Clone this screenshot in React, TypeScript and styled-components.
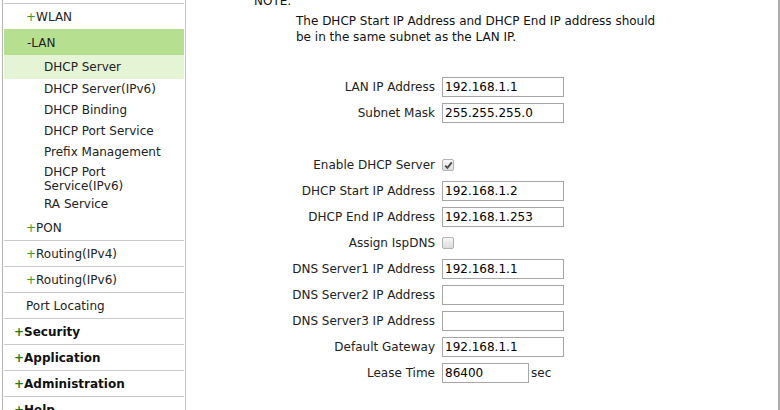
import styled, { createGlobalStyle } from "styled-components";

const GlobalStyle = createGlobalStyle`
  body {
    margin: 0;
    background: #fff;
    font-family: "DejaVu Sans", Verdana, sans-serif;
    font-size: 12px;
    color: #222;
  }
`;

const Page = styled.div`
  display: flex;
  height: 410px;
  padding-left: 2px;
  overflow: hidden;
`;

const Sidebar = styled.nav`
  box-sizing: border-box;
  width: 184px;
  flex-shrink: 0;
  padding: 3px 1px 0;
  border-left: 1px solid #b4b4b4;
  border-right: 1px solid #c4c4c4;
`;

const MenuList = styled.div`
  border-top: 1px solid #cacaca;
`;

const MenuRow = styled.div<{ $bold?: boolean }>`
  box-sizing: border-box;
  display: flex;
  align-items: center;
  height: 26px;
  padding-top: 1px;
  padding-left: ${p => (p.$bold ? "10px" : "22px")};
  border-bottom: 1px solid #cacaca;
  font-weight: ${p => (p.$bold ? "bold" : "normal")};
  color: ${p => (p.$bold ? "#111" : "#222")};
`;

const Plus = styled.span<{ $bold?: boolean }>`
  color: ${p => (p.$bold ? "#1f7a12" : "#3d9a2a")};
`;

const GroupHeader = styled.div`
  box-sizing: border-box;
  display: flex;
  align-items: center;
  height: 26px;
  margin-top: -1px;
  padding-top: 1px;
  padding-left: 23px;
  background: #b6e08f;
  color: #222;
`;

const SubItem = styled.div<{ $active?: boolean; $wrapped?: boolean }>`
  padding: ${p => (p.$active ? "5px 0 5px" : p.$wrapped ? "2px 0 1px" : "3px 0 4px")};
  padding-left: 40px;
  padding-right: 2px;
  line-height: 14px;
  background: ${p => (p.$active ? "#e4f4d5" : "transparent")};
  color: #222;
`;

const Main = styled.main`
  flex: 1;
  border-right: 2px solid #ababab;
`;

const NoteTitle = styled.div`
  margin: -7px 0 0 68px;
  line-height: 16px;
  color: #111;
`;

const NoteText = styled.p`
  margin: 4px 0 0 110px;
  width: 372px;
  line-height: 16px;
  color: #111;
`;

const Form = styled.div`
  display: grid;
  grid-template-columns: 249px auto;
  grid-auto-rows: 26px;
  column-gap: 7px;
  align-items: center;
  margin-top: 29px;
`;

const Label = styled.label`
  text-align: right;
  color: #222;
  white-space: nowrap;
`;

const Spacer = styled.div`
  grid-column: 1 / -1;
`;

const Field = styled.div`
  display: flex;
  align-items: center;
`;

const TextInput = styled.input<{ $short?: boolean }>`
  box-sizing: border-box;
  width: ${p => (p.$short ? "87px" : "122px")};
  height: 20px;
  margin: 0;
  padding: 0 2px;
  border: 1px solid #a6a6a6;
  border-radius: 0;
  font-family: "DejaVu Sans", Verdana, sans-serif;
  font-size: 12px;
  color: #000;
  outline: none;
`;

const Unit = styled.span`
  margin-left: 2px;
  color: #222;
`;

const CheckBox = styled.span`
  box-sizing: border-box;
  display: inline-flex;
  align-items: center;
  justify-content: center;
  width: 12px;
  height: 12px;
  border: 1px solid #b3b3b3;
  border-radius: 2px;
  background: linear-gradient(#f7f7f7, #dcdcdc);
`;

const Check = ({ checked }: { checked: boolean }) => (
  <CheckBox>
    {checked && (
      <svg width="9" height="9" viewBox="0 0 9 9">
        <path d="M1.2 4.6 L3.4 6.9 L7.8 1.4" fill="none" stroke="#4a4a4a" strokeWidth="1.8" />
      </svg>
    )}
  </CheckBox>
);

type Row =
  | { kind: "text"; label: string; value: string; short?: boolean; unit?: string }
  | { kind: "check"; label: string; checked: boolean }
  | { kind: "blank" };

const rows: Row[] = [
  { kind: "text", label: "LAN IP Address", value: "192.168.1.1" },
  { kind: "text", label: "Subnet Mask", value: "255.255.255.0" },
  { kind: "blank" },
  { kind: "check", label: "Enable DHCP Server", checked: true },
  { kind: "text", label: "DHCP Start IP Address", value: "192.168.1.2" },
  { kind: "text", label: "DHCP End IP Address", value: "192.168.1.253" },
  { kind: "check", label: "Assign IspDNS", checked: false },
  { kind: "text", label: "DNS Server1 IP Address", value: "192.168.1.1" },
  { kind: "text", label: "DNS Server2 IP Address", value: "" },
  { kind: "text", label: "DNS Server3 IP Address", value: "" },
  { kind: "text", label: "Default Gateway", value: "192.168.1.1" },
  { kind: "text", label: "Lease Time", value: "86400", short: true, unit: "sec" },
];

const lanItems = [
  "DHCP Server",
  "DHCP Server(IPv6)",
  "DHCP Binding",
  "DHCP Port Service",
  "Prefix Management",
  "DHCP Port Service(IPv6)",
  "RA Service",
];

export default function App() {
  return (
    <>
      <GlobalStyle />
      <Page>
        <Sidebar>
          <MenuList>
            <MenuRow>
              <Plus>+</Plus>WLAN
            </MenuRow>
            <GroupHeader>-LAN</GroupHeader>
            {lanItems.map((item, i) => (
              <SubItem key={item} $active={i === 0} $wrapped={item === "DHCP Port Service(IPv6)"}>
                {item}
              </SubItem>
            ))}
            <MenuRow>
              <Plus>+</Plus>PON
            </MenuRow>
            <MenuRow>
              <Plus>+</Plus>Routing(IPv4)
            </MenuRow>
            <MenuRow>
              <Plus>+</Plus>Routing(IPv6)
            </MenuRow>
            <MenuRow>Port Locating</MenuRow>
            {["Security", "Application", "Administration", "Help"].map(name => (
              <MenuRow key={name} $bold>
                <Plus $bold>+</Plus>
                {name}
              </MenuRow>
            ))}
          </MenuList>
        </Sidebar>
        <Main>
          <NoteTitle>NOTE:</NoteTitle>
          <NoteText>
            The DHCP Start IP Address and DHCP End IP address should be in the same subnet as the LAN IP.
          </NoteText>
          <Form>
            {rows.map((row, i) => {
              if (row.kind === "blank") return <Spacer key={i} />;
              return [
                <Label key={`l${i}`}>{row.label}</Label>,
                <Field key={`f${i}`}>
                  {row.kind === "check" ? (
                    <Check checked={row.checked} />
                  ) : (
                    <>
                      <TextInput defaultValue={row.value} $short={row.short} />
                      {row.unit && <Unit>{row.unit}</Unit>}
                    </>
                  )}
                </Field>,
              ];
            })}
          </Form>
        </Main>
      </Page>
    </>
  );
}
